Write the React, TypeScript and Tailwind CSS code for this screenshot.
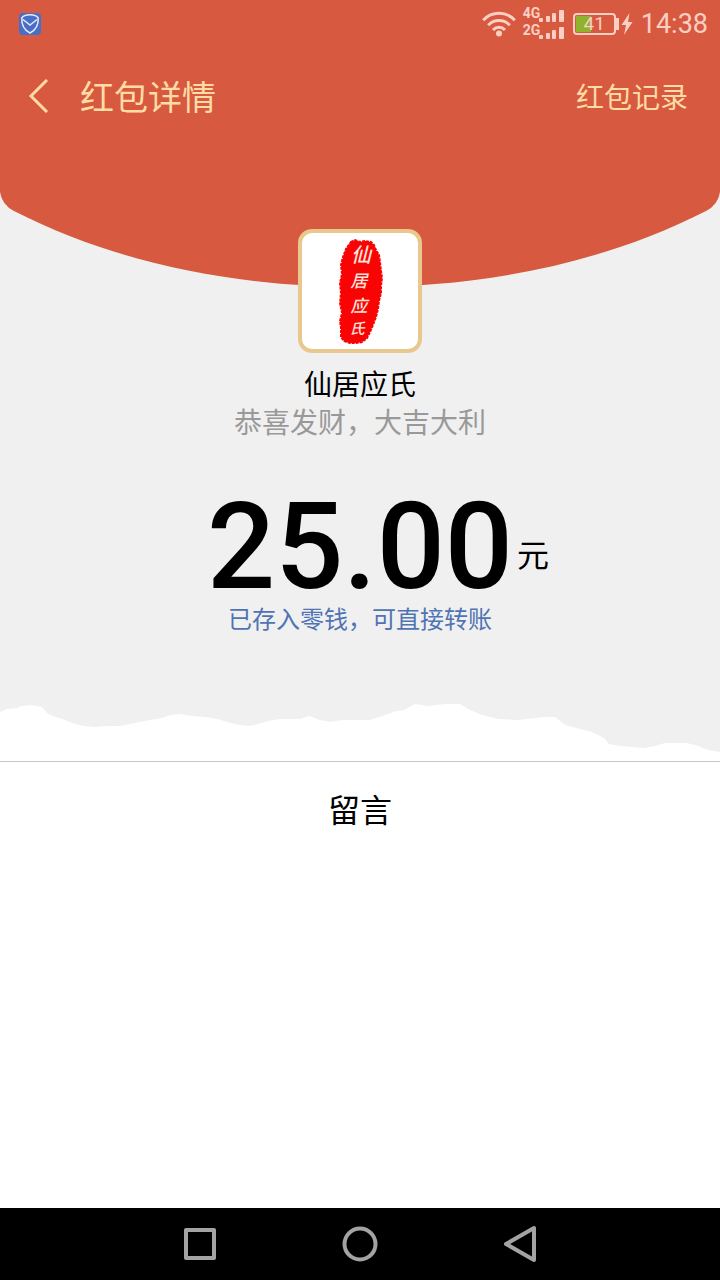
import type { ReactNode } from "react";

const SEAL_CHARS = [
  { char: "仙", x: 59, y: 29, size: 20 },
  { char: "居", x: 57, y: 54, size: 17 },
  { char: "应", x: 57, y: 79, size: 17 },
  { char: "氏", x: 55, y: 101, size: 15 },
];

function ShieldBadge() {
  return (
    <svg viewBox="0 0 24 24" className="h-6 w-6" aria-hidden="true">
      <rect x="1" y="1" width="22" height="22" rx="4" fill="#4470cb" />
      <path
        d="M12 2.8C8 2.8 5 4 3.8 6C3.5 12 6 18 12 21C18 18 20.5 12 20.2 6C19 4 16 2.8 12 2.8Z"
        fill="none"
        stroke="#f3e6ee"
        strokeWidth="1.5"
        strokeLinejoin="round"
      />
      <path d="M5 7.5L12 13L19 7.5" fill="none" stroke="#f3e6ee" strokeWidth="1.5" />
    </svg>
  );
}

function WifiIcon() {
  return (
    <svg viewBox="0 0 34 26" className="h-[26px] w-[34px]" fill="none" stroke="currentColor" strokeWidth="3" aria-hidden="true">
      <path d="M1.2 9.2C10 0 24 0 32.8 9.2" />
      <path d="M6.2 14.2C12 8 22 8 27.8 14.2" />
      <path d="M11 19C14.5 15.3 19.5 15.3 23 19" />
      <circle cx="17" cy="22.5" r="3" fill="currentColor" stroke="none" />
    </svg>
  );
}

function SignalRow({ label }: { label: string }) {
  return (
    <div className="flex h-[17px] items-start">
      <span className="w-4 text-[14px] leading-4 font-bold">{label}</span>
      <svg viewBox="0 0 25 13" className="h-[13px] w-[25px] self-end" fill="currentColor" aria-hidden="true">
        <rect x="0" y="9" width="4" height="4" rx="1" />
        <rect x="7" y="7" width="4" height="6" rx="1" />
        <rect x="13" y="4" width="4" height="9" rx="1" />
        <rect x="20" y="1" width="5" height="12" rx="1" />
      </svg>
    </div>
  );
}

function Battery({ level }: { level: number }) {
  return (
    <div className="flex items-center">
      <div className="relative h-[22px] w-[43px] rounded-sm border-2 border-current">
        <div className="h-full border border-transparent">
          <div className="h-full bg-[#8fb32b]" style={{ width: `${level}%` }} />
        </div>
        <span className="absolute inset-0 text-center text-[19px] leading-[18px]">{level}</span>
      </div>
      <div className="h-3 w-[3px] bg-current" />
      <svg viewBox="0 0 12 22" className="ml-[2px] h-[22px] w-3" fill="currentColor" aria-hidden="true">
        <path d="M8.5 0L0.5 12H5L3 22L11.5 9H7Z" />
      </svg>
    </div>
  );
}

function StatusBar() {
  return (
    <div className="flex h-12 items-center bg-[#d75940] pr-3 pl-[18px] font-[Roboto,sans-serif] text-[#fbcfc3]">
      <ShieldBadge />
      <div className="ml-auto flex items-center">
        <WifiIcon />
        <div className="mt-[-4px] ml-[7px]">
          <SignalRow label="4G" />
          <SignalRow label="2G" />
        </div>
        <div className="ml-[9px]">
          <Battery level={41} />
        </div>
        <span className="ml-2 text-[27px] leading-12">14:38</span>
      </div>
    </div>
  );
}

function TitleBar() {
  return (
    <header className="flex h-24 items-center justify-between bg-[#d75940] pr-8 pl-7 text-[#ffdca4]">
      <div className="flex items-center">
        <button type="button" aria-label="返回" className="mr-8 flex h-12 w-5 items-center">
          <svg viewBox="0 0 20 34" className="h-[34px] w-5" fill="none" stroke="currentColor" strokeWidth="3" aria-hidden="true">
            <path d="M19 1L3 17L19 33" />
          </svg>
        </button>
        <h1 className="text-[34px] leading-12">红包详情</h1>
      </div>
      <button type="button" className="text-[28px] leading-10">
        红包记录
      </button>
    </header>
  );
}

function Avatar() {
  return (
    <div className="relative mt-[-59px] h-[124px] w-[124px] overflow-hidden rounded-[14px] border-4 border-[#e8c88f] bg-white">
      <svg viewBox="0 0 116 116" className="h-full w-full" role="img" aria-label="仙居应氏">
        <path
          d="M49 9L53 7L58 9L63 8L69 9L72 12L74 17L77 22L78 29L79 38L80 45L79 53L79 60L77 68L76 76L74 84L71 92L68 99L65 105L60 109L54 110L48 110L42 108L39 104L39 95L38 88L40 80L38 70L39 60L38 50L40 41L39 32L41 24L44 16Z"
          fill="#f90404"
          stroke="#f90404"
          strokeWidth="2"
          strokeDasharray="3 1"
        />
        {SEAL_CHARS.map(({ char, x, y, size }) => (
          <text
            key={char}
            x={x}
            y={y}
            fontSize={size}
            textAnchor="middle"
            fill="#ffe3da"
            className="font-medium italic"
          >
            {char}
          </text>
        ))}
      </svg>
    </div>
  );
}

function TornEdge() {
  return (
    <svg viewBox="0 0 720 71" preserveAspectRatio="none" className="mt-[60px] block h-[71px] w-full" aria-hidden="true">
      <path
        d="M0 22L7 19L17 18L21 16L32 15L42 17L48 24L56 27L65 30L75 34L84 36L95 37L108 36L120 36L135 33L150 30L162 28L170 25L180 24L192 26L205 27L218 29L230 33L240 35L250 36L258 34L268 31L280 29L300 29L309 26L320 30L330 32L342 30L370 30L382 26L396 21L404 20L415 14L428 16L445 14L460 14L468 19L482 25L498 29L518 30L535 28L545 27L555 27L565 35L580 39L592 42L604 48L609 54L620 56L645 58L655 56L665 53L687 53L698 56L708 60L720 62V71H0Z"
        fill="#ffffff"
      />
    </svg>
  );
}

function NavButton({ label, children }: { label: string; children: ReactNode }) {
  return (
    <button type="button" aria-label={label} className="flex h-12 w-12 items-center justify-center">
      <svg viewBox="0 0 40 40" className="h-10 w-10" fill="none" stroke="currentColor" strokeWidth="4" strokeLinejoin="round" aria-hidden="true">
        {children}
      </svg>
    </button>
  );
}

export default function App() {
  return (
    <div className="flex min-h-screen flex-col bg-white font-['Noto_Sans_CJK_SC',sans-serif] text-black">
      <StatusBar />
      <TitleBar />

      <main className="flex flex-col">
        <section className="flex flex-col items-center bg-[#f0f0f0]">
          <svg viewBox="0 0 720 144" preserveAspectRatio="none" className="block h-36 w-full" aria-hidden="true">
            <path d="M0 0H720V48Q718 61 706 67C600 121 480 143 360 143S120 121 14 67Q2 61 0 48Z" fill="#d75940" />
          </svg>
          <Avatar />
          <h2 className="mt-3 text-[28px] leading-9">仙居应氏</h2>
          <p className="text-[28px] leading-10 text-[#999999]">恭喜发财，大吉大利</p>

          <div className="mt-[46px] grid w-full grid-cols-[1fr_auto_1fr] items-center">
            <span className="col-start-2 font-[Roboto,sans-serif] text-[120px] leading-[120px] font-medium">25.00</span>
            <span className="pt-3 pl-1 text-[32px] leading-10">元</span>
          </div>
          <a href="#balance" className="mt-[-1px] text-[24px] leading-6 text-[#4f73b3]">
            已存入零钱，可直接转账
          </a>
          <TornEdge />
        </section>

        <section className="border-t border-[#c8c8c8] pt-[26px] text-center">
          <h3 className="text-[32px] leading-10">留言</h3>
        </section>
      </main>

      <nav className="mt-auto flex h-18 items-center justify-center gap-28 bg-black text-[#a3a3a3]">
        <NavButton label="最近任务">
          <rect x="6" y="6" width="28" height="28" />
        </NavButton>
        <NavButton label="主屏幕">
          <circle cx="20" cy="20" r="15.5" />
        </NavButton>
        <NavButton label="返回上一页">
          <path d="M34 4V36L6 20Z" />
        </NavButton>
      </nav>
    </div>
  );
}
